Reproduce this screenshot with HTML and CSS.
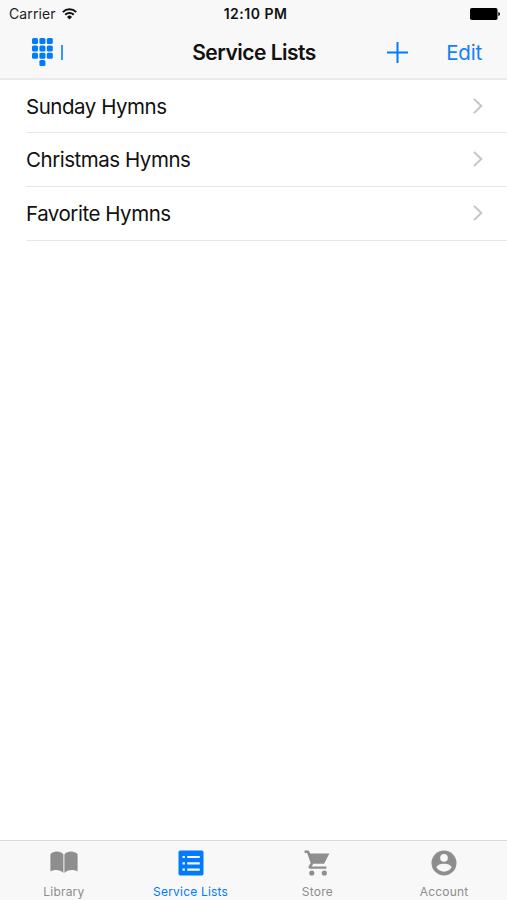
FILE: index.html
```html
<!DOCTYPE html>
<html lang="en">
<head>
  <meta charset="UTF-8">
  <meta name="viewport" content="width=device-width, initial-scale=1.0">
  <title>Service Lists</title>
  <link rel="stylesheet" href="styles.css">
</head>
<body>
  <header class="header">
    <div class="status-bar">
      <div class="carrier">
        <span>Carrier</span>
        <svg class="wifi" width="15" height="12" viewBox="0 0 15 12" fill="none" stroke="#111" stroke-width="2">
          <path d="M.8 4.1a9.5 9.5 0 0 1 13.4 0M3.2 6.8a6.1 6.1 0 0 1 8.6 0"/>
          <path d="M7.5 11.5 5 8.9a3.5 3.5 0 0 1 5 0z" fill="#111" stroke="none"/>
        </svg>
      </div>
      <div class="clock">12:10 PM</div>
      <svg class="battery" width="30" height="12" viewBox="0 0 30 12">
        <rect width="27.5" height="12" rx="1.8"/>
        <path d="M28.3 4c2.2.4 2.2 3.6 0 4z"/>
      </svg>
    </div>
    <nav class="nav-bar">
      <div class="nav-left">
        <svg width="21" height="28" viewBox="0 0 21 28" fill="#007aff">
          <rect x="0" y="0" width="6" height="6" rx="1.5"/>
          <rect x="7.4" y="0" width="6" height="6" rx="1.5"/>
          <rect x="14.8" y="0" width="6" height="6" rx="1.5"/>
          <rect x="0" y="7.4" width="6" height="6" rx="1.5"/>
          <rect x="7.4" y="7.4" width="6" height="6" rx="1.5"/>
          <rect x="14.8" y="7.4" width="6" height="6" rx="1.5"/>
          <rect x="0" y="14.8" width="6" height="6" rx="1.5"/>
          <rect x="7.4" y="14.8" width="6" height="6" rx="1.5"/>
          <rect x="14.8" y="14.8" width="6" height="6" rx="1.5"/>
          <rect x="7.4" y="22" width="6" height="6" rx="1.5"/>
        </svg>
        <span class="cursor"></span>
      </div>
      <h1 class="title">Service Lists</h1>
      <div class="nav-right">
        <svg class="plus" width="21" height="21" viewBox="0 0 21 21" stroke="#007aff" stroke-width="2">
          <path d="M10.5 0v21M0 10.5h21"/>
        </svg>
        <span class="edit">Edit</span>
      </div>
    </nav>
  </header>

  <main class="lists">
    <div class="row">
      <span>Sunday Hymns</span>
      <svg width="10" height="16" viewBox="0 0 10 16" fill="none" stroke="#c4c4c6" stroke-width="2"><path d="M1 .9 8.3 8 1 15.1"/></svg>
    </div>
    <div class="row">
      <span>Christmas Hymns</span>
      <svg width="10" height="16" viewBox="0 0 10 16" fill="none" stroke="#c4c4c6" stroke-width="2"><path d="M1 .9 8.3 8 1 15.1"/></svg>
    </div>
    <div class="row">
      <span>Favorite Hymns</span>
      <svg width="10" height="16" viewBox="0 0 10 16" fill="none" stroke="#c4c4c6" stroke-width="2"><path d="M1 .9 8.3 8 1 15.1"/></svg>
    </div>
  </main>

  <footer class="tab-bar">
    <div class="tab">
      <svg width="28" height="26" viewBox="0 0 28 26" fill="currentColor">
        <path d="M.4 4.2C3.2.7 10.6.5 13.4 4.4V23C10.6 19.6 4 19.2.4 21.6zM14.4 4.4C17.2.5 24.8.7 27.6 4.2V21.6C24 19.2 17.2 19.6 14.4 23z"/>
      </svg>
      <span>Library</span>
    </div>
    <div class="tab active">
      <svg width="26" height="26" viewBox="0 0 26 26">
        <rect x=".5" y=".5" width="25" height="25" rx="1.8" fill="currentColor"/>
        <path d="M4.5 7h2.4M4.5 13.3h2.4M4.5 19.6h2.4M9.2 7h12.6M9.2 13.3h12.6M9.2 19.6h12.6" stroke="#f8f8f8" stroke-width="2.2"/>
      </svg>
      <span>Service Lists</span>
    </div>
    <div class="tab">
      <svg width="26" height="26" viewBox="0 0 26 26" fill="currentColor">
        <path d="M.5.5h4.2l1.5 3h19.2l-5.3 10.3H9.3L7.6 16.5h14.8v2.2H6.3c-1.6 0-2.2-1.3-1.5-2.6l1.9-3.2L3.1 2.9H.5z"/>
        <circle cx="7.8" cy="23" r="2.6"/>
        <circle cx="20.3" cy="23" r="2.6"/>
      </svg>
      <span>Store</span>
    </div>
    <div class="tab">
      <svg width="26" height="26" viewBox="0 0 26 26">
        <circle cx="13" cy="13" r="12.5" fill="currentColor"/>
        <circle cx="13" cy="7.9" r="3.8" fill="#f8f8f8"/>
        <path d="M5.5 17.6c.4-5.2 14.6-5.2 15 0-3.2 5.4-11.8 5.4-15 0z" fill="#f8f8f8"/>
      </svg>
      <span>Account</span>
    </div>
  </footer>
</body>
</html>
```

FILE: styles.css
```css
* {
  box-sizing: border-box;
}
body {
  margin: 0;
  height: 100vh;
  display: flex;
  flex-direction: column;
  overflow: hidden;
  background: #fff;
  color: #111;
  font-family: Inter, "Liberation Sans", sans-serif;
}
svg {
  display: block;
  flex-shrink: 0;
}
.header {
  height: 80px;
  background: #f8f8f8;
  border-bottom: 2px solid #ebebeb;
}
.status-bar {
  display: grid;
  grid-template-columns: 1fr auto 1fr;
  align-items: center;
  height: 27px;
  padding: 0 7px 0 9px;
}
.carrier {
  display: flex;
  align-items: center;
  gap: 6px;
  font-size: 14px;
  letter-spacing: 0.12px;
  color: #222;
}
.clock {
  padding-left: 2px;
  font-size: 14px;
  font-weight: 600;
  letter-spacing: 0.5px;
}
.battery {
  justify-self: end;
}
.nav-bar {
  display: grid;
  grid-template-columns: 1fr auto 1fr;
  align-items: center;
  height: 50px;
  padding: 0 25px 0 32px;
}
.nav-left {
  display: flex;
  align-items: center;
  gap: 8px;
}
.cursor {
  width: 2px;
  height: 15px;
  background: #3395ff;
}
.title {
  margin: 0;
  font-size: 21px;
  font-weight: 600;
  letter-spacing: -0.5px;
  transform: translateX(-3px);
}
.nav-right {
  display: flex;
  align-items: center;
  justify-content: flex-end;
  gap: 38px;
}
.edit {
  color: #1580f5;
  font-size: 20.5px;
  letter-spacing: -0.2px;
}
.lists {
  flex: 1;
  padding-left: 26px;
}
.row {
  display: flex;
  align-items: center;
  justify-content: space-between;
  height: 53.6px;
  padding-right: 24px;
  border-bottom: 1px solid #e7e7e8;
  font-size: 20.5px;
  letter-spacing: -0.47px;
}
.row:first-child {
  height: 53px;
}
.row:last-child {
  height: 54px;
}
.tab-bar {
  display: grid;
  grid-template-columns: repeat(4, 1fr);
  height: 60px;
  background: #f8f8f8;
  border-top: 1px solid #d8d8d8;
}
.tab {
  display: flex;
  flex-direction: column;
  align-items: center;
  padding: 9px 0 0 1px;
  gap: 8px;
  color: #8e8e8e;
  font-size: 12px;
  line-height: 16px;
  letter-spacing: 0.2px;
}
.active {
  color: #007aff;
}
```
